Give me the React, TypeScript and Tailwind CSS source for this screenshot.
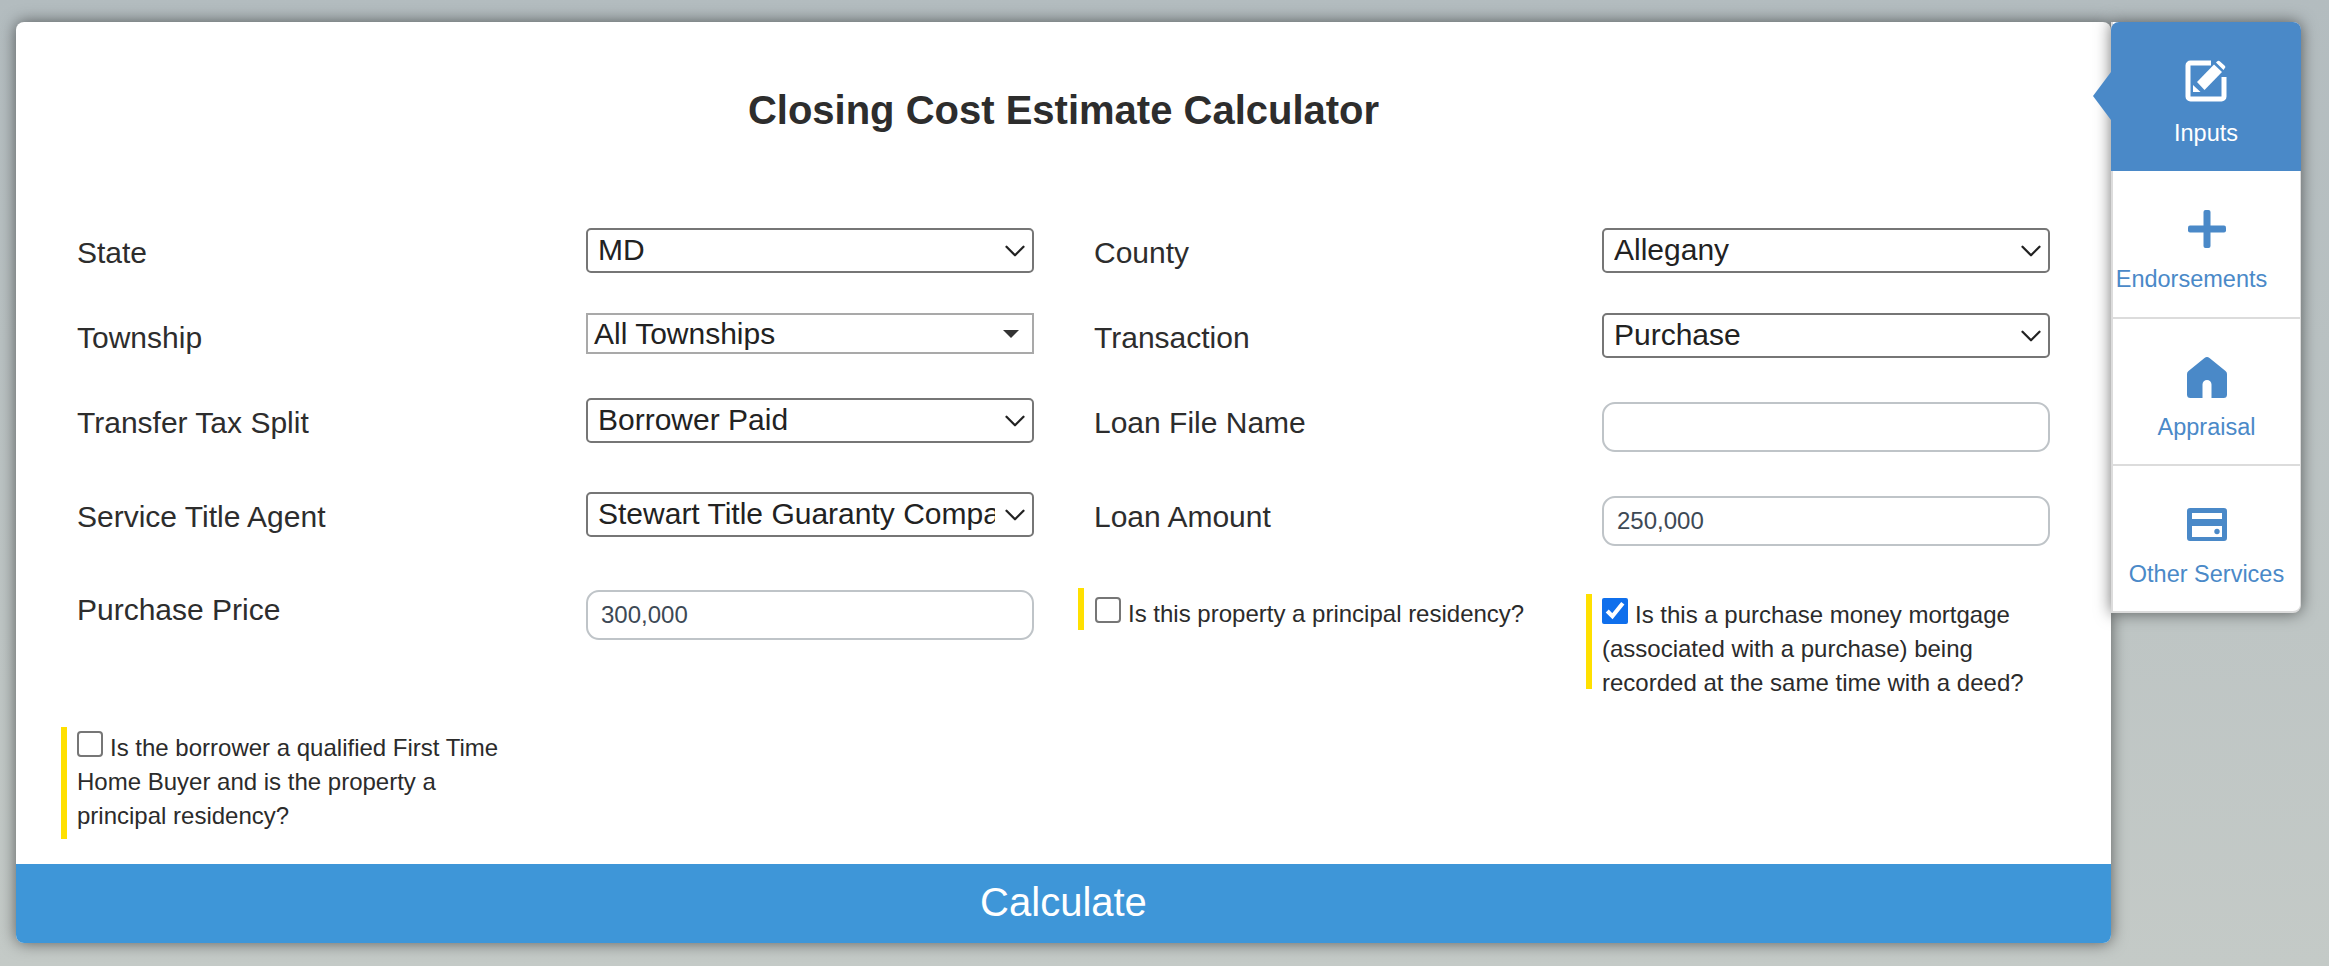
import { ChevronDown } from 'lucide-react';

const tabs = [
  { label: 'Endorsements', icon: <PlusIcon />, h: 'h-[148px]', shift: '-ml-[30px]' },
  { label: 'Appraisal', icon: <HomeIcon />, h: 'h-[147px]', shift: '' },
  { label: 'Other Services', icon: <CardIcon />, h: 'h-[145px]', shift: '' },
];

function EditIcon() {
  return (
    <svg width="42" height="42" viewBox="0 0 42 42" fill="none">
      <path
        d="M26 3H5.500A2.500 2.500 0 0 0 3 5.500v31A2.500 2.500 0 0 0 5.500 39h31a2.500 2.500 0 0 0 2.500-2.500V17"
        stroke="white"
        strokeWidth="5"
      />
      <path d="M12 22 29 4.500 37 12 19.500 30z" fill="white" />
      <path d="M31 2.500l1-1a2 2 0 0 1 3 0l4.500 4a2 2 0 0 1 0 3l-1 1.500z" fill="white" />
      <path d="M8 25v7h7.500z" fill="white" />
    </svg>
  );
}

function PlusIcon() {
  return (
    <svg width="38" height="38" viewBox="0 0 38 38">
      <rect x="15.500" y="0" width="7" height="38" rx="2" fill="#4a89c8" />
      <rect x="0" y="15.500" width="38" height="7" rx="2" fill="#4a89c8" />
    </svg>
  );
}

function HomeIcon() {
  return (
    <svg width="40" height="41" viewBox="0 0 40 41">
      <path
        d="M17.500 1 1.500 14A4 4 0 0 0 0 17v20.500A3.500 3.500 0 0 0 3.500 41H15.500V27.500a4.500 4.500 0 0 1 9 0V41h12a3.500 3.500 0 0 0 3.500-3.500V17a4 4 0 0 0-1.500-3L22.500 1a4 4 0 0 0-5 0z"
        fill="#4a89c8"
      />
    </svg>
  );
}

function CardIcon() {
  return (
    <svg width="40" height="33" viewBox="0 0 40 33">
      <path
        fillRule="evenodd"
        d="M3 0h34a3 3 0 0 1 3 3v27a3 3 0 0 1-3 3H3a3 3 0 0 1-3-3V3a3 3 0 0 1 3-3zm2 5v6h30V5zm0 13v11h30V18z"
        fill="#4a89c8"
      />
      <circle cx="30" cy="23.500" r="2.700" fill="#4a89c8" />
    </svg>
  );
}

function Label({ children, up }: { children: string; up?: boolean }) {
  return <label className={`block leading-[45px] ${up ? '-mt-[3px]' : 'mt-[2px]'}`}>{children}</label>;
}

function Select({ value }: { value: string }) {
  return (
    <div className="relative w-[448px] h-[45px]">
      <select
        defaultValue={value}
        className="block appearance-none w-full h-full border-2 border-[#767676] rounded-[5px] bg-white pl-[10px] pr-[37px] pb-[2px] text-[30px] leading-[35px] text-[#222] font-['Liberation_Sans',sans-serif]"
      >
        <option>{value}</option>
      </select>
      <ChevronDown
        size={34}
        strokeWidth={1.6}
        className="absolute right-[2px] inset-y-0 my-auto text-[#222] pointer-events-none"
      />
    </div>
  );
}

function Input({ value, offset }: { value?: string; offset?: boolean }) {
  return (
    <input
      type="text"
      defaultValue={value}
      className={`block w-[448px] h-[50px] border-2 border-[#bfc4c8] rounded-[13px] bg-white px-[13px] text-[24px] text-[#3d4955] font-['Liberation_Sans',sans-serif] ${offset ? 'mt-[4px]' : ''}`}
    />
  );
}

function Check({ children, checked, barClass }: { children: React.ReactNode; checked?: boolean; barClass: string }) {
  return (
    <div className={`border-l-[6px] border-[#ffe000] text-[24px] leading-[34px] text-[#2b2b2b] ${barClass}`}>
      <input
        type="checkbox"
        defaultChecked={checked}
        className={
          checked
            ? 'w-[26px] h-[26px] mr-[7px] align-[-1px] accent-[#0f6fec]'
            : 'appearance-none inline-block w-[26px] h-[26px] mr-[7px] align-[-1px] border-2 border-[#767676] rounded-[4px] bg-white'
        }
      />
      {children}
    </div>
  );
}

export default function App() {
  return (
    <div className="min-h-[966px] bg-gradient-to-b from-[#b3bcbf] to-[#c4cac7] pt-[22px] pl-[16px] flex items-start font-['Liberation_Sans',sans-serif]">
      <div className="w-[2095px] h-[921px] flex flex-col bg-white rounded-[8px] shadow-[0_0_16px_rgba(0,0,0,0.55)]">
        <h1 className="text-center text-[40px] font-bold text-[#2d2d2d] pt-[65px] h-[206px] leading-[46px]">
          Closing Cost Estimate Calculator
        </h1>

        <div className="flex-1 grid grid-cols-[509px_508px_508px_448px] grid-rows-[85px_85px_94px_98px_137px_auto] pl-[61px] text-[30px] text-[#2d2d2d]">
          <Label>State</Label>
          <Select value="MD" />
          <Label>County</Label>
          <Select value="Allegany" />

          <Label>Township</Label>
          <div className="flex items-center justify-between w-[448px] h-[41px] border-2 border-[#a9a9a9] pl-[6px] pr-[13px] text-[#222]">
            <span>All Townships</span>
            <span className="w-0 h-0 border-x-[8px] border-t-[8px] border-x-transparent border-t-[#333]" />
          </div>
          <Label>Transaction</Label>
          <Select value="Purchase" />

          <Label>Transfer Tax Split</Label>
          <Select value="Borrower Paid" />
          <Label>Loan File Name</Label>
          <Input offset />

          <Label>Service Title Agent</Label>
          <Select value="Stewart Title Guaranty Company" />
          <Label>Loan Amount</Label>
          <Input value="250,000" offset />

          <Label up>Purchase Price</Label>
          <Input value="300,000" />
          <div className="-ml-[16px] -mt-[2px]">
            <Check barClass="h-[42px] pl-[11px] pt-[9px]">Is this property a principal residency?</Check>
          </div>
          <div className="-ml-[16px]">
            <Check checked barClass="h-[95px] pl-[10px] mt-[4px] pt-[4px]">
              Is this a purchase money mortgage (associated with a purchase) being recorded at the same time with a deed?
            </Check>
          </div>

          <div className="w-[445px] -ml-[16px]">
            <Check barClass="pl-[10px] pt-[4px] pb-[6px]">
              Is the borrower a qualified First Time Home Buyer and is the property a principal residency?
            </Check>
          </div>
        </div>

        <button
          type="button"
          className="h-[79px] bg-[#3e96d8] text-white text-[40px] pb-[3px] rounded-b-[8px]"
        >
          Calculate
        </button>
      </div>

      <div className="relative w-[190px] h-[591px] bg-white rounded-r-[8px] border-l-2 border-b-2 border-r border-[#dcdcdc] shadow-[0_0_16px_rgba(0,0,0,0.55)] flex flex-col text-[23.5px] text-[#4a89c8]">
        <div className="relative -ml-[2px] -mr-px h-[149px] bg-[#4a89c8] rounded-t-[8px] flex flex-col items-center pt-[38px] text-white">
          <span className="absolute -left-[18px] top-[50px] w-0 h-0 border-y-[24px] border-r-[18px] border-y-transparent border-r-[#4a89c8]" />
          <EditIcon />
          <span className="mt-[14px]">Inputs</span>
        </div>
        {tabs.map((tab, i) => (
          <div
            key={tab.label}
            className={`${tab.h} flex flex-col items-center pt-[39px] ${i < 2 ? 'border-b-2 border-[#dcdcdc]' : ''}`}
          >
            <div className="h-[38px] flex items-center">{tab.icon}</div>
            <span className={`mt-[14px] whitespace-nowrap ${tab.shift}`}>{tab.label}</span>
          </div>
        ))}
      </div>
    </div>
  );
}
